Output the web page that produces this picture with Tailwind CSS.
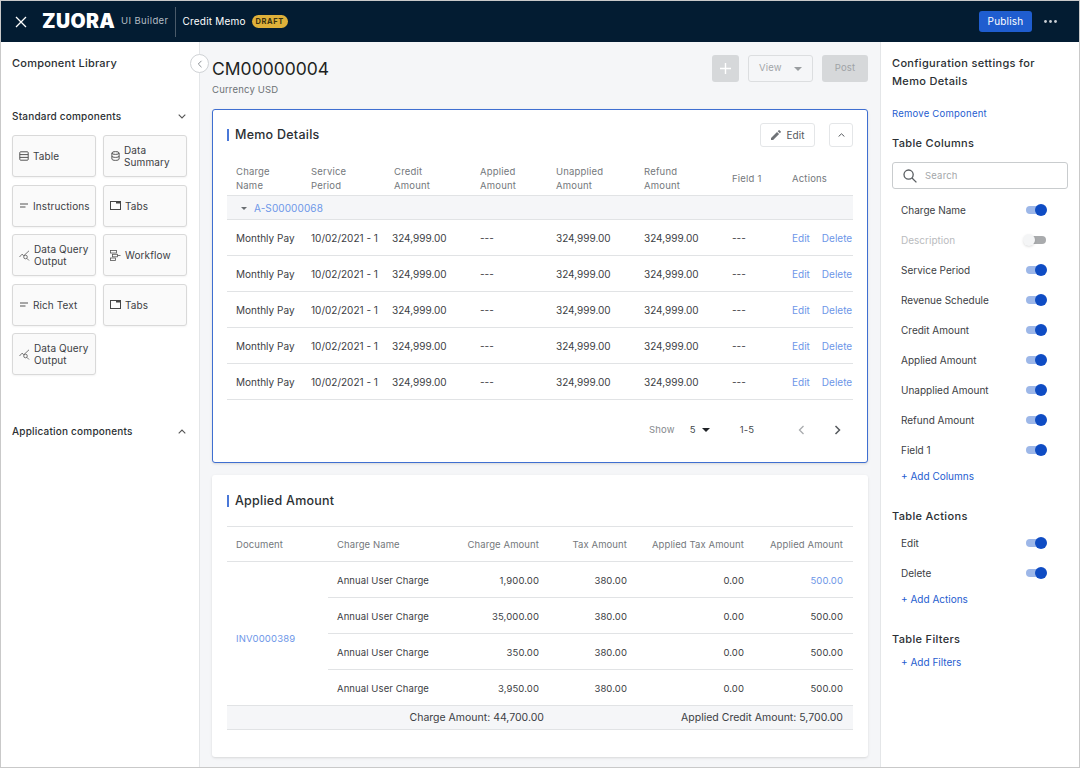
<!DOCTYPE html>
<html lang="en">
<head>
    <meta charset="UTF-8">
    <title>Credit Memo - UI Builder</title>
    <script src="https://cdn.jsdelivr.net/npm/@tailwindcss/browser@4"></script>
</head>
<body class="w-[1080px] h-[768px] overflow-hidden bg-white font-['Inter','Noto_Sans',sans-serif] text-[10px] text-[#2b2f33]">
<div class="w-full h-full border border-[#c9c9c9] flex flex-col">

    <!-- Top bar -->
    <header class="h-[41px] shrink-0 bg-[#031c32] flex items-center text-white">
        <svg class="ml-[14px] w-[12px] h-[12px]" viewBox="0 0 12 12" fill="none" stroke="white" stroke-width="1.3"><path d="M1 1l10 10M11 1L1 11"/></svg>
        <span class="ml-[15px] w-[79px] text-[19.5px] leading-none font-black tracking-[0.02em]">ZUORA</span>
        <span class="text-[9.5px] text-[#b4bcc4] tracking-[0.04em]">UI Builder</span>
        <div class="ml-[7px] w-px h-[30px] bg-[#4a5a69]"></div>
        <span class="ml-[6px] text-[10px] tracking-[0.02em]">Credit Memo</span>
        <span class="ml-[6px] h-[13px] w-[36px] rounded-full bg-[#dfb13a] text-[#3a3210] text-[7.5px] font-bold tracking-[0.08em] flex items-center justify-center">DRAFT</span>
        <button class="ml-auto w-[53px] h-[21px] rounded-[3px] bg-[#1f5dcf] text-[10px] tracking-[0.02em]">Publish</button>
        <svg class="ml-[12px] mr-[22px] w-[13px] h-[3px]" viewBox="0 0 13 3" fill="#c8ced4"><circle cx="1.5" cy="1.5" r="1.4"/><circle cx="6.5" cy="1.5" r="1.4"/><circle cx="11.5" cy="1.5" r="1.4"/></svg>
    </header>

    <div class="flex flex-1 min-h-0">
        <!-- Component library -->
        <aside class="relative w-[199px] shrink-0 bg-white border-r border-[#e4e6e8] px-[11px]">
            <h2 class="mt-[14px] text-[11px] leading-[14px] font-medium tracking-[0.02em]">Component Library</h2>
            <button class="absolute right-[-10px] top-[12px] w-[19px] h-[19px] rounded-full bg-white border border-[#cfd2d5] flex items-center justify-center">
                <svg class="w-[6px] h-[8px]" viewBox="0 0 6 8" fill="none" stroke="#8a8f94" stroke-width="1"><path d="M4.5 .8L1.3 4l3.2 3.2"/></svg>
            </button>
            <div class="mt-[39px] flex items-center justify-between pr-[2px]">
                <h3 class="text-[10px] leading-[14px] font-medium tracking-[0.02em]">Standard components</h3>
                <svg class="w-[8px] h-[5px]" viewBox="0 0 8 5" fill="none" stroke="#555" stroke-width="1.1"><path d="M.7 .7L4 4l3.3-3.3"/></svg>
            </div>
            <div id="library" class="mt-[12px] grid grid-cols-[84px_84px] gap-x-[7px] gap-y-[7.5px]"></div>
            <div class="mt-[49px] flex items-center justify-between pr-[2px]">
                <h3 class="text-[10px] leading-[14px] font-medium tracking-[0.02em]">Application components</h3>
                <svg class="w-[8px] h-[5px]" viewBox="0 0 8 5" fill="none" stroke="#555" stroke-width="1.1"><path d="M.7 4.3L4 1l3.3 3.3"/></svg>
            </div>
        </aside>

        <!-- Main -->
        <main class="flex-1 min-w-0 bg-[#f5f6f8] px-[12px]">
            <div class="h-[67px] flex items-start justify-between">
                <div class="pt-[15px]">
                    <h1 class="text-[17.5px] leading-[24px] text-[#1c1f22]">CM00000004</h1>
                    <p class="mt-[2px] text-[9.5px] leading-[14px] tracking-[0.02em] text-[#6d7276]">Currency USD</p>
                </div>
                <div class="pt-[13px] flex items-center">
                    <button class="w-[27px] h-[27px] rounded-[3px] bg-[#d6d8da] flex items-center justify-center">
                        <svg class="w-[11px] h-[11px]" viewBox="0 0 11 11" stroke="white" stroke-width="1.4"><path d="M5.5 0v11M0 5.5h11"/></svg>
                    </button>
                    <button class="ml-[9px] w-[65px] h-[27px] rounded-[3px] border border-[#dcdee0] flex items-center text-[#a2a5a8] text-[9.5px] tracking-[0.02em]">
                        <span class="ml-[10px]">View</span>
                        <span class="ml-[12px] w-0 h-0 border-x-[4px] border-x-transparent border-t-[4px] border-t-[#9a9da0]"></span>
                    </button>
                    <button class="ml-[9px] w-[46px] h-[27px] rounded-[3px] bg-[#d6d8da] text-[#a0a3a6] text-[9.5px] tracking-[0.02em]">Post</button>
                </div>
            </div>

            <!-- Memo details card -->
            <section class="h-[354px] rounded-[3px] bg-white border border-[#3f6fd1] shadow-sm px-[14px]">
                <div class="h-[50px] flex items-center">
                    <div class="w-[2px] h-[12px] bg-[#4a78d8]"></div>
                    <h2 class="ml-[6px] text-[12.5px] font-medium tracking-[0.02em]">Memo Details</h2>
                    <button class="ml-auto w-[55px] h-[24px] rounded-[3px] border border-[#e4e6e8] flex items-center justify-center gap-[6px] text-[#55595d] text-[10px]">
                        <svg class="w-[10px] h-[10px]" viewBox="0 0 10 10" fill="#6f7377"><path d="M0 10V7.9L6 1.9 8.1 4 2.1 10zM6.7 1.2L7.7.2a.6.6 0 0 1 .8 0l1.3 1.3a.6.6 0 0 1 0 .8l-1 1z"/></svg>
                        Edit
                    </button>
                    <button class="ml-[14px] w-[24px] h-[24px] rounded-[3px] border border-[#e4e6e8] flex items-center justify-center">
                        <svg class="w-[7px] h-[4px]" viewBox="0 0 7 4" fill="none" stroke="#55595d" stroke-width="1"><path d="M.6 3.5L3.5.8l2.9 2.7"/></svg>
                    </button>
                </div>
                <div class="h-[36px] pt-[2px] grid grid-cols-[75px_83px_86px_76px_88px_88px_60px_61px] pl-[9px] items-center border-b border-[#e1e3e5] text-[9.5px] tracking-[0.02em] leading-[14px] text-[#74787c]">
                    <div>Charge<br>Name</div>
                    <div>Service<br>Period</div>
                    <div>Credit<br>Amount</div>
                    <div>Applied<br>Amount</div>
                    <div>Unapplied<br>Amount</div>
                    <div>Refund<br>Amount</div>
                    <div>Field 1</div>
                    <div>Actions</div>
                </div>
                <div class="h-[24px] pt-[1px] flex items-center bg-[#f5f6f8] border-b border-[#e1e3e5] pl-[14px]">
                    <span class="w-0 h-0 border-x-[3px] border-x-transparent border-t-[3.5px] border-t-[#6a6e72]"></span>
                    <a class="ml-[7px] text-[#6d96e8] text-[10px] tracking-[0.01em]">A-S00000068</a>
                </div>
                <div id="memo-rows"></div>
                <div class="h-[60px] flex items-center text-[9.5px] tracking-[0.02em]">
                    <span class="ml-[422px] text-[#85898d]">Show</span>
                    <span class="ml-[15px] text-[#44484c]">5</span>
                    <span class="ml-[6px] w-0 h-0 border-x-[4px] border-x-transparent border-t-[4px] border-t-[#1f2226]"></span>
                    <span class="ml-[30px] text-[#44484c]">1-5</span>
                    <svg class="ml-[44px] w-[7px] h-[10px]" viewBox="0 0 7 10" fill="none" stroke="#a8abae" stroke-width="1.3"><path d="M5.5 1L1.5 5l4 4"/></svg>
                    <svg class="ml-[29px] w-[7px] h-[10px]" viewBox="0 0 7 10" fill="none" stroke="#55595d" stroke-width="1.5"><path d="M1.5 1l4 4-4 4"/></svg>
                </div>
            </section>

            <!-- Applied amount card -->
            <section class="mt-[12px] h-[282px] rounded-[3px] bg-white shadow-sm px-[15px]">
                <div class="h-[51px] pt-[1px] flex items-center">
                    <div class="w-[2px] h-[12px] bg-[#4a78d8]"></div>
                    <h2 class="ml-[6px] text-[12.5px] font-medium tracking-[0.02em]">Applied Amount</h2>
                </div>
                <div class="h-[36px] pt-[2px] flex items-center border-y border-[#e1e3e5] text-[9.5px] tracking-[0.01em] text-[#74787c]">
                    <div class="w-[101px] pl-[9px]">Document</div>
                    <div class="grid grid-cols-[100px_102px_88px_117px_99px] w-[506px] ml-[9px] text-right">
                        <div class="text-left">Charge Name</div>
                        <div>Charge Amount</div>
                        <div>Tax Amount</div>
                        <div>Applied Tax Amount</div>
                        <div>Applied Amount</div>
                    </div>
                </div>
                <div class="flex border-b border-[#e1e3e5]">
                    <div class="w-[101px] pl-[9px] pt-[12px] flex items-center text-[#6d96e8] text-[9.5px] tracking-[0.015em]">INV0000389</div>
                    <div id="applied-rows" class="flex-1"></div>
                </div>
                <div class="h-[24px] flex items-center bg-[#f5f6f8] border-b border-[#e1e3e5] text-[10.5px] text-[#3c4044]">
                    <div class="w-[317px] text-right">Charge Amount: 44,700.00</div>
                    <div class="w-[299px] text-right">Applied Credit Amount: 5,700.00</div>
                </div>
            </section>
        </main>

        <!-- Configuration -->
        <aside class="w-[199px] shrink-0 bg-white border-l border-[#e4e6e8] px-[11px]">
            <h2 class="mt-[12px] text-[11px] leading-[18px] font-medium tracking-[0.03em]">Configuration settings for<br>Memo Details</h2>
            <a class="block mt-[17px] text-[9.5px] leading-[14px] tracking-[0.025em] text-[#1f5dcf]">Remove Component</a>
            <h3 class="mt-[14px] text-[11px] leading-[16px] font-medium tracking-[0.03em]">Table Columns</h3>
            <div class="mt-[11px] w-[176px] h-[27px] rounded-[3px] border border-[#c9ccce] flex items-center">
                <svg class="ml-[10px] w-[14px] h-[14px]" viewBox="0 0 14 14" fill="none" stroke="#5a5e62" stroke-width="1.3"><circle cx="5.6" cy="5.6" r="4.6"/><path d="M9 9l4.4 4.4"/></svg>
                <span class="ml-[8px] pt-[1px] text-[9.5px] tracking-[0.02em] text-[#a4a7aa]">Search</span>
            </div>
            <div id="columns" class="mt-[6px]"></div>
            <a class="block mt-[4px] ml-[9px] text-[10px] leading-[14px] text-[#1f5dcf]">+ Add Columns</a>
            <h3 class="mt-[25px] text-[11px] leading-[16px] font-medium tracking-[0.03em]">Table Actions</h3>
            <div id="actions" class="mt-[4px]"></div>
            <a class="block mt-[4px] ml-[9px] text-[10px] leading-[14px] text-[#1f5dcf]">+ Add Actions</a>
            <h3 class="mt-[25px] text-[11px] leading-[16px] font-medium tracking-[0.03em]">Table Filters</h3>
            <a class="block mt-[8px] ml-[9px] text-[10px] leading-[14px] text-[#1f5dcf]">+ Add Filters</a>
        </aside>
    </div>
</div>

<script>
    // --- Icons ---
    const icons = {
        table: '<svg class="w-[10px] h-[10px] shrink-0" viewBox="0 0 10 10" fill="none" stroke="#555" stroke-width="1"><rect x=".8" y=".8" width="8.4" height="8.4" rx=".8"/><path d="M.8 3.6h8.4M.8 6.4h8.4"/></svg>',
        data: '<svg class="w-[9px] h-[10px] shrink-0 ml-[1px]" viewBox="0 0 9 10" fill="none" stroke="#555" stroke-width="1"><ellipse cx="4.5" cy="2" rx="3.6" ry="1.4"/><path d="M.9 2v6c0 .8 1.6 1.4 3.6 1.4S8.100 8.800 8.100 8V2M.9 5c0 .8 1.600 1.400 3.600 1.400S8.100 5.800 8.100 5"/></svg>',
        text: '<svg class="w-[10px] h-[5px] shrink-0" viewBox="0 0 10 5" stroke="#555" stroke-width="1"><path d="M1 1h8M1 4h5.500"/></svg>',
        tabs: '<svg class="w-[11px] h-[9px] shrink-0" viewBox="0 0 11 9" fill="none" stroke="#444" stroke-width="1"><rect x=".5" y=".5" width="10" height="8"/><path d="M6 1.500h4.500" stroke-width="2"/></svg>',
        query: '<svg class="w-[11px] h-[11px] shrink-0" viewBox="0 0 11 11" fill="none" stroke="#555" stroke-width=".8"><path d="M.5 7L3 4.200l1.800 1.500L10 .8"/><circle cx="6.500" cy="7" r="1.800"/><path d="M7.800 8.300l2.200 2.200"/></svg>',
        workflow: '<svg class="w-[11px] h-[11px] shrink-0" viewBox="0 0 11 11" fill="none" stroke="#555" stroke-width=".8"><rect x=".5" y=".5" width="6" height="2.500"/><rect x="2.500" y="4.300" width="5" height="2.500"/><rect x=".5" y="8" width="5" height="2.500"/><path d="M7.500 5.500h3"/></svg>'
    };

    const library = [
        ['table', 'Table'], ['data', 'Data<br>Summary'],
        ['text', 'Instructions'], ['tabs', 'Tabs'],
        ['query', 'Data Query<br>Output'], ['workflow', 'Workflow'],
        ['text', 'Rich Text'], ['tabs', 'Tabs'],
        ['query', 'Data Query<br>Output']
    ];

    const columns = [
        ['Charge Name', true], ['Description', false], ['Service Period', true],
        ['Revenue Schedule', true], ['Credit Amount', true], ['Applied Amount', true],
        ['Unapplied Amount', true], ['Refund Amount', true], ['Field 1', true]
    ];

    const applied = [
        ['1,900.00', true], ['35,000.00', false], ['350.00', false], ['3,950.00', false]
    ];

    // --- Render ---
    document.getElementById('library').innerHTML = library.map(([icon, label]) => `
        <div class="h-[42px] rounded-[3px] bg-[#fafafa] border border-[#d9d9d9] shadow-xs flex items-center gap-[4px] pl-[6px] text-[10px] leading-[12px] tracking-[0.01em] text-[#3c4044]">
            ${icons[icon]}<span>${label}</span>
        </div>`).join('');

    document.getElementById('memo-rows').innerHTML = Array(5).fill(0).map(() => `
        <div class="h-[36px] pt-[1px] grid grid-cols-[75px_81px_88px_76px_88px_88px_60px_61px] pl-[9px] items-center border-b border-[#e1e3e5] text-[10px] text-[#3c4044]">
            <div>Monthly Pay</div><div>10/02/2021 - 1</div><div>324,999.00</div><div>---</div>
            <div>324,999.00</div><div>324,999.00</div><div>---</div>
            <div class="flex gap-[12px] text-[#6d96e8]"><span>Edit</span><span>Delete</span></div>
        </div>`).join('');

    document.getElementById('applied-rows').innerHTML = applied.map(([amount, link], i) => `
        <div class="${i ? 'h-[36px] border-t border-[#e1e3e5]' : 'h-[35px]'} pt-[3px] grid grid-cols-[100px_102px_88px_117px_99px] pl-[9px] pr-[10px] items-center text-right text-[9.5px] tracking-[0.01em] text-[#3c4044]">
            <div class="text-left whitespace-nowrap">Annual User Charge</div><div>${amount}</div><div>380.00</div><div>0.00</div>
            <div class="${link ? 'text-[#6d96e8]' : ''}">500.00</div>
        </div>`).join('');

    function toggleRow(label, on) {
        const track = on ? 'bg-[#9db7e8]' : 'bg-[#a9abad]';
        const knob = on ? 'left-[10px] bg-[#0f4cc4]' : 'left-[-2px] bg-[#f4f5f6] shadow';
        return `
        <div class="h-[30px] flex items-center justify-between pl-[9px] pr-[21px] text-[10px] ${on ? 'text-[#3c4044]' : 'text-[#b9bbbe]'}">
            <span>${label}</span>
            <span class="relative w-[22px] h-[12px] flex items-center">
                <span class="w-[20px] h-[8px] ml-[1px] rounded-full ${track}"></span>
                <span class="absolute top-0 w-[12px] h-[12px] rounded-full ${knob}"></span>
            </span>
        </div>`;
    }
    document.getElementById('columns').innerHTML = columns.map(([l, on]) => toggleRow(l, on)).join('');
    document.getElementById('actions').innerHTML = ['Edit', 'Delete'].map(l => toggleRow(l, true)).join('');
</script>
</body>
</html>
